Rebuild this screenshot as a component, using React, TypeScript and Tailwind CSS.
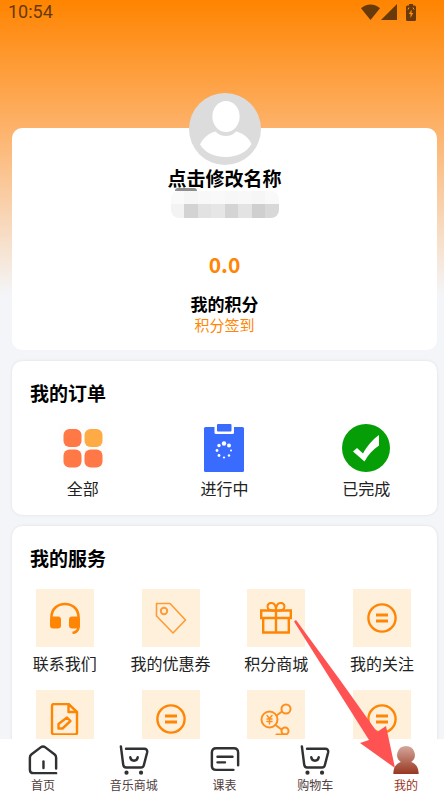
import React from 'react';
import { clsx } from 'clsx';

type IconProps = React.ComponentProps<'svg'>;

function WifiIcon(props: IconProps) {
  return (
    <svg viewBox="0 0 19 16" fill="currentColor" aria-hidden="true" {...props}>
      <path d="M0 4.2C5-.9 14-.9 19 4.2L9.500 16Z" />
    </svg>
  );
}

function SignalIcon(props: IconProps) {
  return (
    <svg viewBox="0 0 16 16" fill="currentColor" aria-hidden="true" {...props}>
      <path d="M16 0V16H0Z" />
    </svg>
  );
}

function BatteryIcon(props: IconProps) {
  return (
    <svg viewBox="0 0 10 17" fill="currentColor" aria-hidden="true" {...props}>
      <path
        fillRule="evenodd"
        d="M3 0h4v1.500h1.500A1.500 1.500 0 0 1 10 3v12.500a1.500 1.500 0 0 1-1.500 1.500h-7A1.500 1.500 0 0 1 0 15.500V3a1.500 1.500 0 0 1 1.500-1.500H3ZM5.600 5.500 2.800 10h1.700v4L7.300 9H5.600Z"
      />
      <path d="M2 5.500 3 3.500M7 3.500 8 5.500" stroke="#ff9420" strokeWidth="1" />
    </svg>
  );
}

function Avatar(props: IconProps) {
  return (
    <svg viewBox="0 0 72 72" aria-hidden="true" {...props}>
      <circle cx="36" cy="36" r="36" fill="#dcdcdc" />
      <ellipse cx="37" cy="23.500" rx="13.600" ry="15.500" fill="#fff" />
      <path
        d="M11 51.500C14 45 20 40 26.500 38.500 32 44.500 42 44.500 47 38.500 54 40 60 45 62.500 51 58 59 48 64 37 64S16 60 11 51.500Z"
        fill="#fff"
      />
    </svg>
  );
}

function AllOrdersIcon(props: IconProps) {
  return (
    <svg viewBox="0 0 48 48" aria-hidden="true" {...props}>
      <path fill="#fdfdfd" d="M0 0h48v48H0z" />
      <g fill="#ff7845">
        <rect x="4.500" y="5" width="18" height="18" rx="6" />
        <rect x="4.500" y="25.500" width="18" height="18" rx="6" />
        <rect x="25.500" y="25.500" width="18" height="18" rx="6" />
      </g>
      <rect x="25.500" y="5" width="18" height="18" rx="6" fill="#ffab45" />
    </svg>
  );
}

function InProgressIcon(props: IconProps) {
  return (
    <svg viewBox="0 0 48 48" aria-hidden="true" {...props}>
      <rect x="4" y="3" width="40" height="45" rx="1.500" fill="#3a6bff" />
      <path d="M14.500 2v6.500a1.500 1.500 0 0 0 1.500 1.500h16.500a1.500 1.500 0 0 0 1.500-1.500V2" fill="#fff" />
      <rect x="17" y="0" width="14.500" height="7.500" rx="1" fill="#3a6bff" />
      <g fill="#fff">
        <circle cx="24" cy="19.500" r="2.200" />
        <circle cx="29" cy="21.500" r="2" />
        <circle cx="31" cy="26.500" r="1" />
        <circle cx="29" cy="31.500" r="1.200" />
        <circle cx="24" cy="33.500" r="1.100" />
        <circle cx="19" cy="31.500" r="1.400" />
        <circle cx="17" cy="26.500" r="1.400" />
        <circle cx="19" cy="21.500" r="1.700" />
      </g>
    </svg>
  );
}

function CompletedIcon(props: IconProps) {
  return (
    <svg viewBox="0 0 48 48" aria-hidden="true" {...props}>
      <circle cx="24" cy="24" r="24" fill="#069e06" />
      <path d="M11 27.500 15 24l6 5.500C25 22 31 15 37 11v10.500C31 25.500 26 31 22.500 37.500Z" fill="#fff" />
    </svg>
  );
}

function HeadsetIcon(props: IconProps) {
  return (
    <svg viewBox="0 0 32 32" fill="none" stroke="#ff8505" strokeWidth="2.600" aria-hidden="true" {...props}>
      <path d="M2.500 16v-1C2.500 7 8.500 2 16 2s13.500 5 13.500 13v9.500c0 3.500-2.500 6-6 6.500" />
      <rect x="1" y="14.500" width="11" height="12" rx="3" fill="#ff8505" stroke="none" />
      <rect x="20" y="14.500" width="11" height="12" rx="3" fill="#ff8505" stroke="none" />
    </svg>
  );
}

function TagIcon(props: IconProps) {
  return (
    <svg viewBox="0 0 32 32" fill="none" stroke="#ff9b35" strokeWidth="1.600" strokeLinejoin="round" aria-hidden="true" {...props}>
      <path d="M1.500 1.500h13.500L30.500 18 18 31 1.500 14Z" />
      <circle cx="9" cy="9" r="3.200" strokeWidth="2" />
    </svg>
  );
}

function GiftIcon(props: IconProps) {
  return (
    <svg viewBox="0 0 32 32" fill="none" stroke="#ff8505" strokeWidth="2.400" aria-hidden="true" {...props}>
      <path d="M1.200 8.500h29.600v7.500H1.200ZM3.200 16v14.500h25.600V16M16 8v22.500" />
      <path d="M16 8.500C10 9.500 7.500 7 7.500 4.500S10 0.500 12 1c3 0.500 4 3.500 4 7.500Zm0 0C22 9.500 24.500 7 24.500 4.500S22 0.500 20 1c-3 0.500-4 3.500-4 7.500Z" strokeWidth="2" />
    </svg>
  );
}

function FollowIcon(props: IconProps) {
  return (
    <svg viewBox="0 0 32 32" fill="none" stroke="#ff8505" strokeWidth="2.400" aria-hidden="true" {...props}>
      <circle cx="16" cy="16" r="13.600" />
      <path d="M10 13h12M10 19h12" strokeWidth="2.800" />
    </svg>
  );
}

function NoteIcon(props: IconProps) {
  return (
    <svg viewBox="0 0 32 32" fill="none" stroke="#ff8505" strokeWidth="2.400" strokeLinejoin="round" aria-hidden="true" {...props}>
      <path d="M5 1h14.500L28 9v20.500a2 2 0 0 1-2 2H5a2 2 0 0 1-2-2V3a2 2 0 0 1 2-2Z" />
      <path d="M19.500 1v8H28Z" />
      <path d="m9.500 21 8.500-6.500 3.500 3.500-8 7.500h-4Z" />
    </svg>
  );
}

function ShareCoinIcon(props: IconProps) {
  return (
    <svg viewBox="0 0 32 32" fill="none" stroke="#ff8f1c" strokeWidth="2" strokeLinecap="round" aria-hidden="true" {...props}>
      <circle cx="9.500" cy="16.500" r="8" />
      <circle cx="26" cy="6" r="4.500" />
      <circle cx="25" cy="28" r="3.500" />
      <path d="m16.500 12.500 5.500-4M15.500 22l6 4.500M16.500 31.500H25" />
      <path d="M7 12.500l2.500 3 2.500-3M7 16h5M7 18.500h5M9.500 16v5" strokeWidth="1.500" />
    </svg>
  );
}

function HomeIcon(props: IconProps) {
  return (
    <svg viewBox="0 0 32 32" fill="none" stroke="#303133" strokeWidth="2.600" strokeLinecap="round" strokeLinejoin="round" aria-hidden="true" {...props}>
      <path d="M30 25V13.500c0-1.500-.5-2.500-1.500-3.300L18.500 2.500c-1.500-1.200-3.500-1.200-5 0L3.500 10.200C2.500 11 2 12 2 13.500V26c0 2.500 1.500 4 4 4h24" />
      <path d="M16.500 17.500v7" />
    </svg>
  );
}

function CartIcon(props: IconProps) {
  return (
    <svg viewBox="0 0 32 32" fill="none" stroke="#303133" strokeWidth="2.600" strokeLinecap="round" strokeLinejoin="round" aria-hidden="true" {...props}>
      <path d="M2 1.500 4.500 21c.3 2 1.300 3 3 3h16c1.700 0 2.700-.8 3-2.500L30 8c.5-2.500-.8-4-3-4H7.500" />
      <path d="M12 13c.5 5 7.500 5 8 0" />
      <path d="M8 29.500h0M23.500 29.500h0" strokeWidth="4.500" />
    </svg>
  );
}

function ScheduleIcon(props: IconProps) {
  return (
    <svg viewBox="0 0 32 32" fill="none" stroke="#303133" strokeWidth="2.600" strokeLinecap="round" strokeLinejoin="round" aria-hidden="true" {...props}>
      <path d="M30 21.500V8c0-3-1.500-4.500-4.500-4.500H6.500C3.500 3.500 2 5 2 8v14c0 3 1.500 4.500 4.500 4.500H25" />
      <path d="M8 12.500h16M8 18.500h8" />
    </svg>
  );
}

function MineIcon(props: IconProps) {
  return (
    <svg viewBox="0 0 32 32" aria-hidden="true" {...props}>
      <defs>
        <linearGradient id="mine" x1="0" y1="1" x2="0" y2="32" gradientUnits="userSpaceOnUse">
          <stop stopColor="#d5a79c" />
          <stop offset="1" stopColor="#96331c" />
        </linearGradient>
      </defs>
      <path
        fill="url(#mine)"
        d="M16 1a9.500 9.500 0 0 1 5.500 17.200C27 20 29.500 24.500 29.500 31h-27c0-6.500 2.500-11 8-12.800A9.500 9.500 0 0 1 16 1Z"
      />
    </svg>
  );
}

interface Item {
  label: string;
  icon: React.ComponentType<IconProps>;
}

const ORDERS: Item[] = [
  { label: '全部', icon: AllOrdersIcon },
  { label: '进行中', icon: InProgressIcon },
  { label: '已完成', icon: CompletedIcon },
];

const SERVICES: Item[] = [
  { label: '联系我们', icon: HeadsetIcon },
  { label: '我的优惠券', icon: TagIcon },
  { label: '积分商城', icon: GiftIcon },
  { label: '我的关注', icon: FollowIcon },
  { label: '', icon: NoteIcon },
  { label: '', icon: FollowIcon },
  { label: '', icon: ShareCoinIcon },
  { label: '', icon: FollowIcon },
];

const TABS: Item[] = [
  { label: '首页', icon: HomeIcon },
  { label: '音乐商城', icon: CartIcon },
  { label: '课表', icon: ScheduleIcon },
  { label: '购物车', icon: CartIcon },
  { label: '我的', icon: MineIcon },
];

// Two rows of blocks hiding the phone number
const MASK_TOP = ['bg-[#fafafa]', 'bg-[#f6f6f6]', 'bg-[#f8f8f8]', 'bg-[#f9f9f9]', 'bg-[#f7f7f7]', 'bg-[#f8f8f8]', 'bg-[#f6f6f6]', 'bg-[#f9f9f9]'];
const MASK_BOTTOM = ['bg-[#f3f3f3]', 'bg-[#d3d3d3]', 'bg-[#e2e2e2]', 'bg-[#e6e6e6]', 'bg-[#d4d4d4]', 'bg-[#e3e3e3]', 'bg-[#cfcfcf]', 'bg-[#d8d8d8]'];

function Card({ className, ...props }: React.ComponentProps<'section'>) {
  return <section className={clsx('rounded-[10px] bg-white', className)} {...props} />;
}

export default function App() {
  return (
    <div className="relative flex h-screen flex-col overflow-hidden bg-[#f4f5f8] font-['Noto_Sans_CJK_SC',sans-serif] text-[#222]">
      <main className="min-h-0 flex-1 overflow-hidden bg-[linear-gradient(180deg,#ff8400_0px,#fdb26a_128px,#f4f5f8_295px)]">
        <header className="flex h-6 items-center justify-between pr-7 pl-2 text-[#683a0a]">
          <time className="font-[Roboto,sans-serif] text-lg leading-6">10:54</time>
          <div className="flex items-center">
            <WifiIcon className="h-4 w-[19px]" />
            <SignalIcon className="ml-px h-4 w-4" />
            <BatteryIcon className="ml-[9px] h-[17px] w-2.5" />
          </div>
        </header>

        <div className="flex flex-col gap-[11px] pt-[104px] pr-[7px] pl-3">
          <Card className="flex h-[222px] flex-col items-center">
            <Avatar className="-mt-[35px] size-[72px] shrink-0" />
            <button type="button" className="h-[26px] text-[19px] leading-[26px] font-bold text-black">
              点击修改名称
            </button>
            <div className="relative">
              <div className="grid w-[108px] grid-cols-8 overflow-hidden rounded-lg" aria-hidden="true">
                {MASK_TOP.map((tone, i) => (
                  <span key={i} className={clsx('h-[13px]', tone)} />
                ))}
                {MASK_BOTTOM.map((tone, i) => (
                  <span key={i} className={clsx('h-3.5', tone)} />
                ))}
              </div>
              <span className="absolute -top-[3px] left-1 h-[3px] w-[22px] rounded-t-full bg-[#8f8f8f]" />
            </div>
            <strong className="mt-[30px] text-[21px] leading-8 text-[#ff8505]">0.0</strong>
            <h2 className="mt-3.5 font-['Liberation_Sans','Noto_Sans_CJK_SC',sans-serif] text-[17px] leading-6 font-bold text-black">
              我的积分
            </h2>
            <a
              href="#checkin"
              className="font-['Liberation_Sans','Noto_Sans_CJK_SC',sans-serif] text-[15px] leading-4 text-[#ff8505]"
            >
              积分签到
            </a>
          </Card>

          <Card className="h-[154px] px-[18px] pt-5 shadow-[0_0_3px_rgba(0,0,0,0.1)]">
            <h2 className="text-[19px] leading-6 font-bold text-black">我的订单</h2>
            <div className="-mx-[18px] mt-[19px] grid grid-cols-3">
              {ORDERS.map(({ label, icon: Icon }) => (
                <button key={label} type="button" className="flex flex-col items-center gap-1">
                  <Icon className="size-12" />
                  <span className="text-base leading-6">{label}</span>
                </button>
              ))}
            </div>
          </Card>

          <Card className="px-[18px] pt-5 shadow-[0_0_3px_rgba(0,0,0,0.1)]">
            <h2 className="text-[19px] leading-6 font-bold text-black">我的服务</h2>
            <div className="-mr-4 -ml-[18px] mt-[19px] grid grid-cols-4 gap-y-3">
              {SERVICES.map(({ label, icon: Icon }, i) => (
                <button key={i} type="button" className="flex h-[89px] flex-col items-center gap-1">
                  <span className="flex size-[58px] items-center justify-center bg-[#fff0dc]">
                    <Icon className="size-8" />
                  </span>
                  <span className="text-base leading-6 whitespace-nowrap">{label}</span>
                </button>
              ))}
            </div>
          </Card>
        </div>
      </main>

      <nav className="flex h-14 shrink-0 justify-between bg-white pr-1.5 pl-[11px]">
        {TABS.map(({ label, icon: Icon }) => (
          <a
            key={label}
            href="#tab"
            className={clsx(
              'flex w-16 flex-col items-center pt-1.5 text-xs leading-5',
              label === '我的' ? 'text-[#96331c]' : 'text-[#4f4040]'
            )}
          >
            <Icon className="size-8" />
            {label}
          </a>
        ))}
      </nav>

      {/* Pointer to the active tab */}
      <svg viewBox="0 0 101 148" className="pointer-events-none absolute right-[49px] bottom-[27px] h-[148px] w-[101px]" aria-hidden="true">
        <path d="M0 1.500 2 0 46 60 83 112l9-6 9 42-35-25 9-3L37 60Z" fill="#ff5353" />
      </svg>
    </div>
  );
}
